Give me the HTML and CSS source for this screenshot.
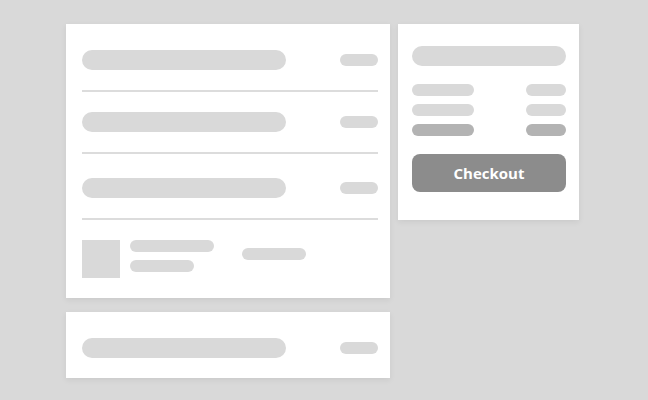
FILE: index.html
```html
<!DOCTYPE html>
<html lang="en">
<head>
<meta charset="utf-8">
<title>Cart skeleton</title>
<link rel="stylesheet" href="styles.css">
</head>
<body>
<div class="layout">
  <div class="column">
    <section class="card cart">
      <div class="row row-first">
        <span class="pill pill-long"></span>
        <span class="pill pill-short"></span>
      </div>
      <div class="divider"></div>
      <div class="row">
        <span class="pill pill-long"></span>
        <span class="pill pill-short"></span>
      </div>
      <div class="divider"></div>
      <div class="row row-third">
        <span class="pill pill-long"></span>
        <span class="pill pill-short"></span>
      </div>
      <div class="divider"></div>
      <div class="row item">
        <span class="thumb"></span>
        <div class="lines">
          <span class="line line-a"></span>
          <span class="line line-b"></span>
        </div>
        <span class="line line-price"></span>
      </div>
    </section>
    <section class="card extra">
      <div class="row row-first">
        <span class="pill pill-long"></span>
        <span class="pill pill-short"></span>
      </div>
    </section>
  </div>
  <aside class="card summary">
    <span class="title-pill"></span>
    <div class="sum-rows">
      <div class="sum-row"><span class="s-left"></span><span class="s-right"></span></div>
      <div class="sum-row"><span class="s-left"></span><span class="s-right"></span></div>
      <div class="sum-row total"><span class="s-left"></span><span class="s-right"></span></div>
    </div>
    <button class="checkout" type="button">Checkout</button>
  </aside>
</div>
</body>
</html>
```

FILE: styles.css
```css
* { box-sizing: border-box; }

html, body {
  margin: 0;
  background: #d9d9d9;
}

body {
  width: 648px;
  height: 400px;
  overflow: hidden;
  font-family: "Open Sans", "Liberation Sans", sans-serif;
}

.layout {
  display: flex;
  align-items: flex-start;
  gap: 8px;
  padding: 24px 0 0 66px;
}

.column {
  display: flex;
  flex-direction: column;
  gap: 14px;
  width: 324px;
}

.card {
  background: #ffffff;
  box-shadow: 0 2px 6px rgba(0, 0, 0, 0.07);
}

.cart,
.extra {
  padding: 0 12px 0 16px;
}

.row {
  display: flex;
  align-items: center;
  justify-content: space-between;
  padding: 20px 0;
}

.row-first { padding-top: 26px; }
.row-third { padding-top: 24px; }

.pill {
  display: block;
  background: #d9d9d9;
  border-radius: 10px;
}

.pill-long { width: 204px; height: 20px; }
.pill-short { width: 38px; height: 12px; border-radius: 6px; }

.divider {
  height: 2px;
  background: #dcdcdc;
}

.item {
  justify-content: flex-start;
  align-items: flex-start;
}

.thumb {
  width: 38px;
  height: 38px;
  background: #d9d9d9;
}

.lines {
  display: flex;
  flex-direction: column;
  gap: 8px;
  margin-left: 10px;
}

.line {
  display: block;
  height: 12px;
  border-radius: 6px;
  background: #d9d9d9;
}

.line-a { width: 84px; }
.line-b { width: 64px; }
.line-price { width: 64px; margin: 8px 0 0 28px; }

.extra .row { padding-bottom: 20px; }

.summary {
  width: 181px;
  padding: 22px 13px 28px 14px;
  display: flex;
  flex-direction: column;
}

.title-pill {
  display: block;
  height: 20px;
  border-radius: 10px;
  background: #d9d9d9;
}

.sum-rows {
  display: flex;
  flex-direction: column;
  gap: 8px;
  margin-top: 18px;
}

.sum-row {
  display: flex;
  justify-content: space-between;
}

.s-left,
.s-right {
  display: block;
  height: 12px;
  border-radius: 6px;
  background: #d9d9d9;
}

.s-left { width: 62px; }
.s-right { width: 40px; }

.total .s-left,
.total .s-right { background: #b3b3b3; }

.checkout {
  margin-top: 18px;
  height: 38px;
  border: 0;
  border-radius: 8px;
  background: #8c8c8c;
  color: #ffffff;
  font-family: "Open Sans", "Liberation Sans", sans-serif;
  font-weight: 700;
  font-size: 15px;
  padding: 0;
}
```
